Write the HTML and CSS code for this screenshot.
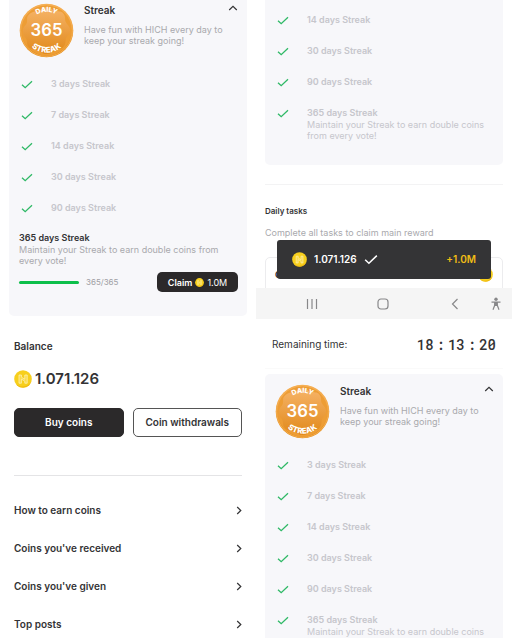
FILE: index.html
```html
<!DOCTYPE html>
<html lang="en">
<head>
<meta charset="utf-8">
<title>Coins and streaks</title>
<meta name="viewport" content="width=device-width, initial-scale=1">
<link rel="stylesheet" href="styles.css">
</head>
<body>
<svg class="defs" aria-hidden="true">
  <defs>
    <linearGradient id="gold" x1="0" y1="0" x2="0" y2="1">
      <stop offset="0" stop-color="#f9b45c"/><stop offset="1" stop-color="#e28a14"/>
    </linearGradient>
    <linearGradient id="gold-inner" x1="0" y1="0" x2="0" y2="1">
      <stop offset="0" stop-color="#f6b469"/><stop offset="1" stop-color="#e1891a"/>
    </linearGradient>
    <path id="arc-top" d="M9 28a19 19 0 0 1 38 0"/>
    <path id="arc-bottom" d="M5 27.500a23 23 0 0 0 46 0"/>
    <symbol id="medal" viewBox="0 0 56 56">
      <circle cx="28" cy="28" r="27.3" fill="url(#gold)"/>
      <circle cx="28" cy="28" r="25.6" fill="#ed9d35"/>
      <path d="M28 4c4 0 5 3 9 4s7 0 9 4 0 5 2 8 4 4 4 8-3 5-4 8 0 6-3 9-5 1-8 3-5 4-9 4-6-3-9-4-6 0-9-3-1-6-3-9-3-4-3-8 3-5 4-8-1-5 2-8 5-3 9-4 5-4 9-4z" fill="url(#gold-inner)"/>
      <circle cx="28" cy="28" r="26.4" fill="none" stroke="#f4ad52" stroke-width="1"/>
      <g fill="#fff" text-anchor="middle">
        <text class="medal-arc"><textPath href="#arc-top" startOffset="50%">DAILY</textPath></text>
        <text class="medal-number" x="28" y="34">365</text>
        <text class="medal-arc medal-arc-large"><textPath href="#arc-bottom" startOffset="50%">STREAK</textPath></text>
      </g>
    </symbol>
    <symbol id="check" viewBox="0 0 12 9">
      <path d="M1 4.7 4.2 7.7 11 1.2" fill="none" stroke="currentColor" stroke-width="1.3"/>
    </symbol>
    <symbol id="up" viewBox="0 0 10 6">
      <path d="M1.2 5 5 1.4 8.8 5" fill="none" stroke="currentColor" stroke-width="1.2"/>
    </symbol>
    <symbol id="right" viewBox="0 0 6 9">
      <path d="M1.2 1 4.8 4.5 1.2 8" fill="none" stroke="currentColor" stroke-width="1.2"/>
    </symbol>
    <symbol id="coin" viewBox="0 0 18 18">
      <circle cx="9" cy="9" r="8.8" fill="#f7cf1d"/>
      <path d="M2 14A8.8 8.8 0 0 0 17.5 11 10 10 0 0 1 2 14z" fill="#efb810"/>
      <path d="M5 5h2.4v2.2l3.4 2V5h2.4v8.2h-2.4v-2.1l-3.4-2v4.1H5z" fill="#f9d94a" stroke="#fff5c4" stroke-width=".7"/>
    </symbol>
  </defs>
</svg>

<main class="board">
  <div class="column">
    <section class="card card-open">
      <header class="streak-head">
        <svg class="medal" role="img" aria-label="Daily streak 365"><use href="#medal"/></svg>
        <div class="streak-text"><h2>Streak</h2><p>Have fun with HICH every day to<br>keep your streak going!</p></div>
        <button class="toggle" aria-label="Collapse"><svg><use href="#up"/></svg></button>
      </header>
      <ul class="steps">
        <li><svg><use href="#check"/></svg><h3>3 days Streak</h3></li>
        <li><svg><use href="#check"/></svg><h3>7 days Streak</h3></li>
        <li><svg><use href="#check"/></svg><h3>14 days Streak</h3></li>
        <li><svg><use href="#check"/></svg><h3>30 days Streak</h3></li>
        <li><svg><use href="#check"/></svg><h3>90 days Streak</h3></li>
      </ul>
      <div class="goal">
        <h3>365 days Streak</h3>
        <p>Maintain your Streak to earn double coins from<br>every vote!</p>
        <div class="claim-row">
          <span class="bar"></span><span class="count">365/365</span>
          <button class="claim"><b>Claim</b><svg><use href="#coin"/></svg>1.0M</button>
        </div>
      </div>
    </section>
    <section class="wallet">
      <h2>Balance</h2>
      <div class="amount"><svg><use href="#coin"/></svg>1.071.126</div>
      <div class="actions"><button class="solid">Buy coins</button><button>Coin withdrawals</button></div>
      <nav class="links">
        <a href="#earn">How to earn coins<svg><use href="#right"/></svg></a>
        <a href="#received">Coins you've received<svg><use href="#right"/></svg></a>
        <a href="#given">Coins you've given<svg><use href="#right"/></svg></a>
        <a href="#top">Top posts<svg><use href="#right"/></svg></a>
      </nav>
    </section>
  </div>

  <div class="column">
    <section class="screen">
      <div class="card card-end">
        <ul class="steps">
          <li><svg><use href="#check"/></svg><h3>14 days Streak</h3></li>
          <li><svg><use href="#check"/></svg><h3>30 days Streak</h3></li>
          <li><svg><use href="#check"/></svg><h3>90 days Streak</h3></li>
          <li><svg><use href="#check"/></svg><div><h3>365 days Streak</h3><p>Maintain your Streak to earn double coins<br>from every vote!</p></div></li>
        </ul>
      </div>
      <div class="tasks">
        <h2>Daily tasks</h2>
        <p>Complete all tasks to claim main reward</p>
        <div class="task"><b>C</b><svg><use href="#coin"/></svg></div>
      </div>
      <div class="toast" role="status">
        <svg class="toast-coin"><use href="#coin"/></svg><span>1.071.126</span>
        <svg class="toast-check"><use href="#check"/></svg><span class="gain">+1.0M</span>
      </div>
    </section>
    <nav class="system">
      <button aria-label="Recent apps"><svg viewBox="0 0 12 12"><path d="M1.5 1v10M6 1v10M10.5 1v10"/></svg></button>
      <button aria-label="Home"><svg viewBox="0 0 12 12"><rect x="1" y="1" width="10" height="10" rx="3"/></svg></button>
      <button aria-label="Back"><svg viewBox="0 0 12 12"><path d="M9.500 1 4.500 6l5 5"/></svg></button>
      <button class="access" aria-label="Accessibility"><svg viewBox="0 0 12 14"><circle class="fill" cx="6" cy="2.2" r="1.7"/><path d="M1.5 5.2h9M6 5v3.6M4.8 5.5 4.6 8.5 3 12.8M7.2 5.5l.2 3L9 12.8"/><path class="fill" d="M4.5 5h3v4h-3z"/></svg></button>
    </nav>
    <section class="timer"><span>Remaining time:</span><time><span>18</span><span>:</span><span>13</span><span>:</span><span>20</span></time></section>
    <section class="card card-next">
      <header class="streak-head">
        <svg class="medal" role="img" aria-label="Daily streak 365"><use href="#medal"/></svg>
        <div class="streak-text"><h2>Streak</h2><p>Have fun with HICH every day to<br>keep your streak going!</p></div>
        <button class="toggle" aria-label="Collapse"><svg><use href="#up"/></svg></button>
      </header>
      <ul class="steps">
        <li><svg><use href="#check"/></svg><h3>3 days Streak</h3></li>
        <li><svg><use href="#check"/></svg><h3>7 days Streak</h3></li>
        <li><svg><use href="#check"/></svg><h3>14 days Streak</h3></li>
        <li><svg><use href="#check"/></svg><h3>30 days Streak</h3></li>
        <li><svg><use href="#check"/></svg><h3>90 days Streak</h3></li>
        <li><svg><use href="#check"/></svg><div><h3>365 days Streak</h3><p>Maintain your Streak to earn double coins</p></div></li>
      </ul>
    </section>
  </div>
</main>
</body>
</html>
```
FILE: styles.css
```css
* { box-sizing: border-box; }
body {
  margin: 0;
  background: #fff;
  color: #333335;
  font: 9px/11px Inter, "Liberation Sans", sans-serif;
}
h2, h3, p, ul { margin: 0; padding: 0; }
h2 { font-size: 10px; line-height: 14px; font-weight: 600; }
h3 { font-size: 9px; line-height: 13px; font-weight: 600; }
p { color: #a9a9ad; }
ul { list-style: none; }
svg { display: block; flex: none; }
button { margin: 0; padding: 0; border: 0; background: none; color: inherit; font: inherit; }
.defs { position: absolute; width: 0; height: 0; }

.board { display: grid; grid-template-columns: 1fr 1fr; height: 100vh; overflow: hidden; }
.column { min-width: 0; }

.card { margin: 0 9px; padding: 0 9px 24px 10px; background: #f7f7fa; }
.card-open { padding-top: 3px; border-radius: 0 0 5px 5px; }
.card-end { padding-top: 5px; border-radius: 0 0 5px 5px; }
.card-next { padding-top: 10px; border-radius: 5px 5px 0 0; }

.streak-head { display: flex; align-items: flex-start; height: 55px; margin-bottom: 11px; }
.medal { width: 55px; height: 55px; }
.medal-number { font: 600 17px Inter, sans-serif; }
.medal-arc { font: 800 7px Inter, sans-serif; }
.medal-arc-large { font-size: 8px; }
.streak-text { flex: 1; margin-left: 10px; }
.streak-text p { margin-top: 7px; }
.toggle svg { width: 10px; height: 6px; margin-top: 2px; }

.steps li { display: flex; align-items: flex-start; height: 31px; padding-top: 8px; padding-left: 2px; color: #c6c6cc; }
.steps li:last-child { height: auto; min-height: 31px; }
.steps svg { width: 12px; height: 9px; margin: 3px 18px 0 0; color: #2fb966; }
.steps p { color: #c6c6cc; }

.goal { padding-top: 7px; }
.claim-row { display: flex; align-items: center; margin-top: 6px; }
.bar { width: 60px; height: 3px; border-radius: 2px; background: #0dbf4a; }
.count { margin-left: 7px; color: #a0a0a4; font-size: 8px; }
.claim {
  display: flex; align-items: center; justify-content: center; gap: 3px;
  width: 81px; height: 20px; margin-left: auto;
  border-radius: 5px; background: #2b292a; color: #fff;
}
.claim b { font-weight: 600; }
.claim svg { width: 9px; height: 9px; }

.wallet { padding: 23px 14px 0; font-size: 10px; }
.amount { display: flex; align-items: center; gap: 3px; margin-top: 16px; font-size: 15px; line-height: 20px; font-weight: 600; }
.amount svg { width: 18px; height: 18px; }
.actions { display: grid; grid-template-columns: 1fr 1fr; gap: 9px; margin-top: 19px; }
.actions button { height: 29px; border: 1px solid #555; border-radius: 5px; font-weight: 600; white-space: nowrap; }
.actions .solid { border-color: #2b292a; background: #2b292a; color: #fff; }
.links { margin-top: 38px; padding-top: 15px; border-top: 1px solid #e4e4e6; }
.links a { display: flex; align-items: center; justify-content: space-between; height: 38px; color: inherit; font-weight: 600; text-decoration: none; }
.links svg { width: 6px; height: 9px; }

.screen { position: relative; height: 288px; overflow: hidden; }
.tasks { margin: 19px 9px 0; padding-top: 19px; border-top: 1px solid #f3f3f4; }
.tasks h2 { font-size: 8px; }
.tasks p { margin-top: 9px; }
.task { display: flex; align-items: center; justify-content: space-between; height: 60px; margin-top: 19px; padding: 0 9px 26px; border: 1px solid #ececee; border-radius: 5px; }
.task svg { width: 15px; height: 15px; }
.toast {
  position: absolute; right: 21px; bottom: 9px; left: 21px;
  display: flex; align-items: center; height: 39px; padding: 0 15px;
  border-radius: 3px; background: #343436; color: #fff;
  font-size: 10px; font-weight: 600;
}
.toast-coin { width: 15px; height: 15px; margin-right: 7px; }
.toast-check { width: 14px; height: 11px; margin-left: 7px; }
.gain { margin-left: auto; color: #f0bd15; }

.system { display: flex; align-items: center; height: 31px; padding: 0 10px 0 20px; background: #f5f5f5; }
.system button { display: grid; flex: 1; place-items: center; }
.system .access { flex: 0 0 12px; }
.system svg { width: 12px; height: 12px; fill: none; stroke: #88888a; stroke-width: 1.2; }
.system .access svg { height: 14px; }
.system .fill { fill: #88888a; stroke: none; }

.timer { display: flex; align-items: center; justify-content: space-between; height: 50px; margin: 0 9px 5px; padding: 2px 7px 0; border-bottom: 1px solid #fafafa; font-size: 10px; }
.timer time { display: flex; gap: 3px; font: 500 14px/20px "Roboto Mono", "DejaVu Sans Mono", monospace; }
```
